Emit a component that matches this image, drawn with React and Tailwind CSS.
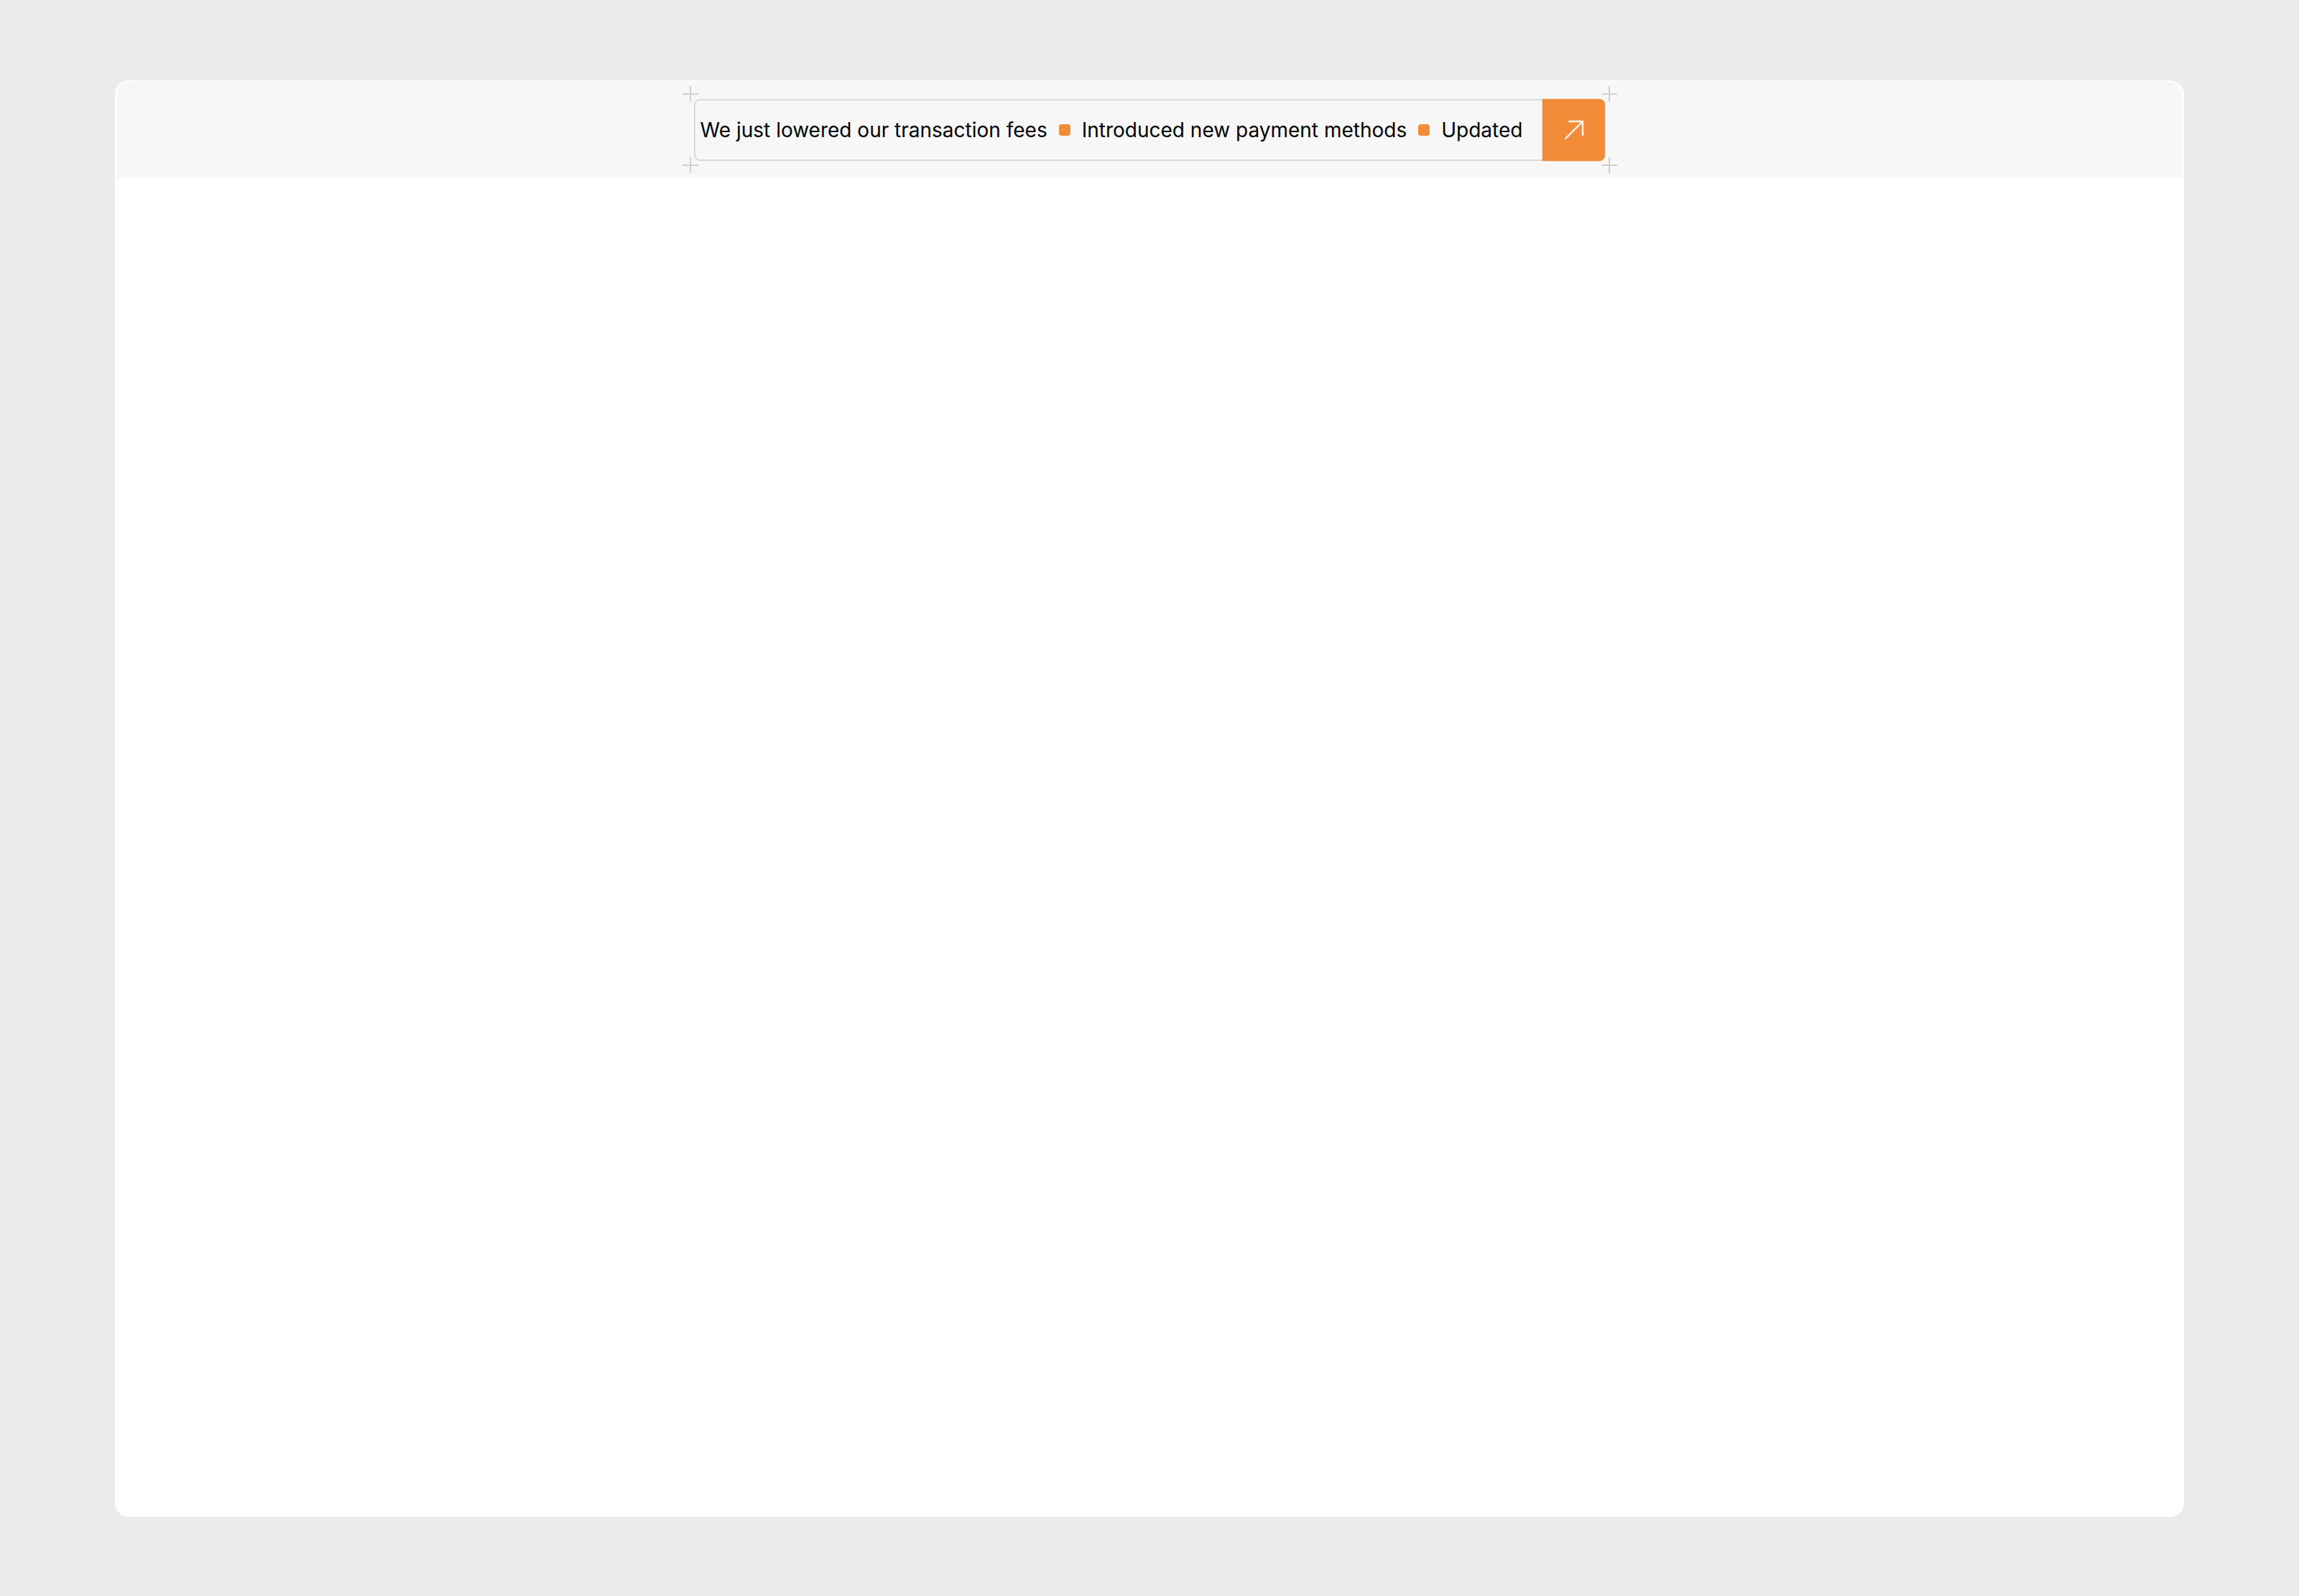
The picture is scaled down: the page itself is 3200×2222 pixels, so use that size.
import React from 'react';

const news = ['We just lowered our transaction fees', 'Introduced new payment methods', 'Updated'];

// small crosshair drawn at each corner of the ticker
const Cross = ({ className }) => (
  <svg className={`absolute ${className}`} width="24" height="24" viewBox="0 0 24 24" fill="none">
    <path d="M12 1v22M1 12h22" stroke="#cfcfcf" strokeWidth="2" />
  </svg>
);

const ArrowUpRight = () => (
  <svg width="28" height="28" viewBox="0 0 28 28" fill="none" stroke="#fff7ec" strokeWidth="2.4" strokeLinecap="round" strokeLinejoin="round">
    <path d="M2 26 26 2" />
    <path d="M7 2h19v19" />
  </svg>
);

const Ticker = () => (
  <div className="relative">
    <Cross className="-left-[17px] -top-[19px]" />
    <Cross className="-right-[18px] -top-[19px]" />
    <Cross className="-left-[17px] -bottom-[18px]" />
    <Cross className="-right-[18px] -bottom-[18px]" />
    <div className="flex h-[86px] items-center rounded-[8px] border-2 border-[#d9d9d9] bg-[#f7f7f7]">
      <div className="flex items-center gap-4 pl-[7px] pr-[28px] text-[28px] text-black whitespace-nowrap">
        {news.map((item, i) => (
          <React.Fragment key={item}>
            {i > 0 && <span className="h-4 w-4 rounded-[4px] bg-[#f28c38]"></span>}
            <span>{item}</span>
          </React.Fragment>
        ))}
      </div>
      <button className="-my-[2px] -mr-[2px] flex h-[86px] w-[87px] items-center justify-center self-stretch rounded-r-[8px] bg-[#f28c38] shadow-[0_0_0_1px_#efd9c4]">
        <ArrowUpRight />
      </button>
    </div>
  </div>
);

export default function App() {
  return (
    <div className="h-[2222px] bg-[#ebebeb] px-[160px] pt-[112px]" style={{ fontFamily: 'Inter, "Noto Sans", sans-serif' }}>
      <div className="h-[2000px] overflow-hidden rounded-[20px] border-2 border-white bg-white">
        <header className="flex h-[134px] items-center justify-center bg-[#f7f7f7]">
          <Ticker />
        </header>
      </div>
    </div>
  );
}
